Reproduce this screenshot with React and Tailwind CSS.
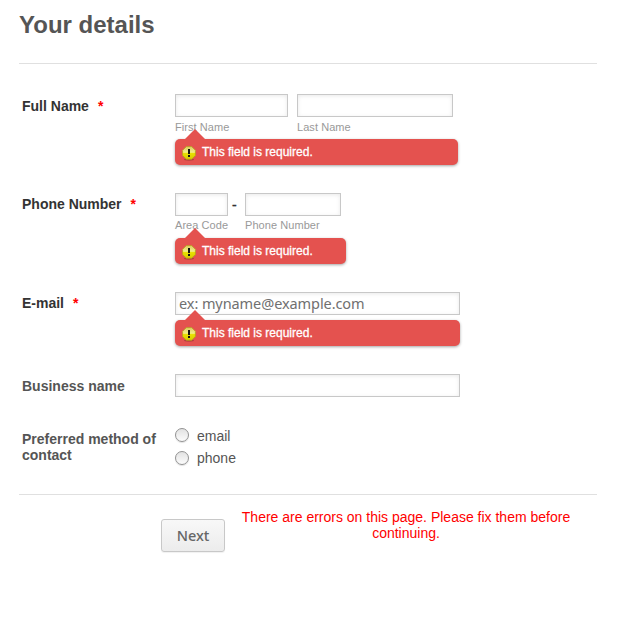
function Field({ width, label, labelGap = "mt-[4px] mb-0", placeholder }) {
  return (
    <div className={`flex flex-col ${width}`}>
      <input
        type="text"
        placeholder={placeholder}
        className="block h-[23px] w-full border border-[#c8c8c8] bg-white px-[3px] pb-[2px] font-['Noto_Sans',sans-serif] text-[14.5px] tracking-[-0.08px] text-[#666] shadow-[inset_0_1px_4px_rgba(0,0,0,0.09)] outline-none placeholder:text-[#707070]"
      />
      {label && (
        <span className={`h-[13px] whitespace-nowrap text-[11px] leading-[13px] tracking-[0.06px] text-[#999] ${labelGap}`}>{label}</span>
      )}
    </div>
  );
}

function WarningIcon() {
  return (
    <svg width="14" height="15" viewBox="0 0 14 15" className="mt-[7px] shrink-0">
      <defs>
        <linearGradient id="warn" x1="0" y1="0" x2="0" y2="1">
          <stop offset="0" stopColor="#dccb62" />
          <stop offset="0.45" stopColor="#f3ee86" />
          <stop offset="0.55" stopColor="#e8e000" />
          <stop offset="1" stopColor="#d8cc00" />
        </linearGradient>
      </defs>
      <ellipse cx="7" cy="13.6" rx="5" ry="1.1" fill="#8f3430" opacity="0.6" />
      <path d="M4.3 .6h5.4l3.7 3.7v5.200l-3.7 3.7H4.3L.6 9.500V4.300z" fill="url(#warn)" stroke="#b5a01c" strokeWidth="0.8" />
      <path d="M6 3h2v5H6zM6 9h2v2H6z" fill="#111" />
    </svg>
  );
}

function ErrorBubble({ width }) {
  return (
    <div className={`relative mt-[5px] flex h-[26px] rounded-[5px] bg-[#e4524f] pl-[7px] shadow-[0_1px_3px_rgba(0,0,0,0.36)] ${width}`}>
      <svg width="20" height="10" viewBox="0 0 20 10" className="absolute -top-[10px] left-[10px]">
        <path d="M10 0L20 10H0z" fill="#e4524f" />
      </svg>
      <WarningIcon />
      <span className="ml-[6px] text-[12px] leading-[26px] text-white [-webkit-text-stroke:0.3px_white]">This field is required.</span>
    </div>
  );
}

function Row({ label, required, height, labelTop = "mt-[3px]", children }) {
  return (
    <div className={`flex ${height}`}>
      <div className={`w-[153px] shrink-0 pr-[10px] text-[14px] font-bold leading-[16px] ${labelTop} ${required ? "text-[#333]" : "text-[#555]"}`}>
        {label}
        {required && <span className="ml-[9px] text-[14px] leading-none text-[#f00]">*</span>}
      </div>
      <div className="flex flex-col">{children}</div>
    </div>
  );
}

function Radio({ label, dotGap = "mt-0" }) {
  return (
    <label className="flex items-start text-[14px] leading-[16px] text-[#555]">
      <span className={`h-[14px] w-[14px] shrink-0 rounded-full border border-[#929292] bg-gradient-to-b from-[#e2e2e2] to-[#fcfcfc] shadow-[0_1px_1px_rgba(0,0,0,0.12)] ${dotGap}`} />
      <span className="ml-[8px]">{label}</span>
    </label>
  );
}

export default function App() {
  return (
    <div className="h-[617px] w-[633px] overflow-hidden bg-white pl-[19px] font-['Liberation_Sans',Arial,sans-serif]">
      <div className="h-[64px] w-[578px] border-b border-[#e0e0e0] pt-[11px]">
        <h1 className="text-[24px] font-bold leading-[28px] text-[#555]">Your details</h1>
      </div>

      <form className="pl-[3px] pt-[30px]">
        <Row label="Full Name" required height="h-[99px]" labelTop="mt-[4px]">
          <div className="flex gap-[9px]">
            <Field width="w-[113px]" label="First Name" />
            <Field width="w-[156px]" label="Last Name" />
          </div>
          <ErrorBubble width="w-[283px]" />
        </Row>
        <Row label="Phone Number" required height="h-[99px]">
          <div className="flex">
            <Field width="w-[53px]" label="Area Code" labelGap="mt-[3px] mb-[1px]" />
            <span className="w-[17px] pl-[4px] pt-[4px] text-[14px] leading-[16px] text-[#333] [-webkit-text-stroke:0.4px_#333]">-</span>
            <Field width="w-[96px]" label="Phone Number" labelGap="mt-[3px] mb-[1px]" />
          </div>
          <ErrorBubble width="w-[171px]" />
        </Row>
        <Row label="E-mail" required height="h-[82px]">
          <Field width="w-[285px]" placeholder="ex: myname@example.com" />
          <ErrorBubble width="w-[285px]" />
        </Row>
        <Row label="Business name" height="h-[54px]" labelTop="mt-[4px]">
          <Field width="w-[285px]" />
        </Row>
        <Row label="Preferred method of contact" height="h-[66px]">
          <div className="flex flex-col gap-[6px]">
            <Radio label="email" />
            <Radio label="phone" dotGap="mt-[1px]" />
          </div>
        </Row>
      </form>

      <div className="flex w-[578px] items-start border-t border-[#e0e0e0] pl-[142px]">
        <button
          type="button"
          className="mt-[24px] h-[33px] w-[64px] rounded-[3px] border border-[#c8c8c8] bg-gradient-to-b from-[#f8f8f8] to-[#ececec] pb-[2px] font-['Noto_Sans',sans-serif] text-[14.5px] font-medium leading-[28px] text-[#666] shadow-[0_1px_1px_rgba(0,0,0,0.06)]"
        >
          Next
        </button>
        <p className="ml-[11px] mt-[14px] w-[340px] text-center text-[14px] leading-[16px] text-[#f00]">
          There are errors on this page. Please fix them before continuing.
        </p>
      </div>
    </div>
  );
}
